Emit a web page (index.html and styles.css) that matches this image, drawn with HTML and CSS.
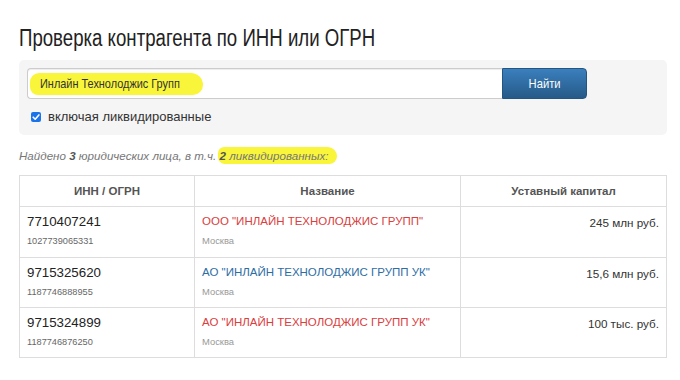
FILE: index.html
```html
<!DOCTYPE html>
<html lang="ru">
<head>
<meta charset="utf-8">
<link rel="stylesheet" href="styles.css">
</head>
<body>
<div class="page">
  <h1 class="title"><span class="narrow">Проверка контрагента по ИНН или ОГРН</span></h1>
  <div class="panel">
    <div class="search">
      <div class="input"><span class="mark"><span class="narrow-in">Инлайн Технолоджис Групп</span></span></div>
      <button class="btn"><span class="narrow-btn">Найти</span></button>
    </div>
    <label class="check"><span class="box"><svg width="10" height="10" viewBox="0 0 10 10"><path d="M2.2 5.2 L4.2 7.2 L7.9 2.9" fill="none" stroke="#fff" stroke-width="1.6" stroke-linecap="round" stroke-linejoin="round"/></svg></span>включая ликвидированные</label>
  </div>
  <p class="summary">Найдено <b>3</b> юридических лица, в т.ч. <span class="mark2"><b>2</b> ликвидированных:</span></p>
  <table class="results">
    <thead>
      <tr><th class="c1">ИНН / ОГРН</th><th class="c2">Название</th><th class="c3">Уставный капитал</th></tr>
    </thead>
    <tbody>
      <tr>
        <td><div class="inn">7710407241</div><div class="sub">1027739065331</div></td>
        <td><div class="name dead">ООО "ИНЛАЙН ТЕХНОЛОДЖИС ГРУПП"</div><div class="city">Москва</div></td>
        <td class="cap">245 млн руб.</td>
      </tr>
      <tr>
        <td><div class="inn">9715325620</div><div class="sub">1187746888955</div></td>
        <td><div class="name live">АО "ИНЛАЙН ТЕХНОЛОДЖИС ГРУПП УК"</div><div class="city">Москва</div></td>
        <td class="cap">15,6 млн руб.</td>
      </tr>
      <tr>
        <td><div class="inn">9715324899</div><div class="sub">1187746876250</div></td>
        <td><div class="name dead">АО "ИНЛАЙН ТЕХНОЛОДЖИС ГРУПП УК"</div><div class="city">Москва</div></td>
        <td class="cap">100 тыс. руб.</td>
      </tr>
    </tbody>
  </table>
</div>
</body>
</html>
```
FILE: styles.css
```css
* { box-sizing: border-box; }
html, body { margin: 0; padding: 0; background: #fff; }
body { font-family: "Liberation Sans", Arial, sans-serif; color: #333; }
.page { width: 667px; padding: 0 0 0 19px; }
.title { margin: 0; padding-top: 23px; font-size: 23px; font-weight: normal; line-height: 30px; color: #222; white-space: nowrap; }
.narrow { display: inline-block; transform: scaleX(0.81); transform-origin: left center; }
.panel { margin-top: 7px; background: #f5f5f5; border-radius: 5px; padding: 8px 9px 9px 8px; height: 75px; }
.search { display: flex; height: 31px; width: 560px; }
.input { flex: 1; background: #fff; border: 1px solid #ccc; border-right: none; border-radius: 4px 0 0 4px; box-shadow: inset 0 1px 1px rgba(0,0,0,.075); padding: 3px 2px; display: flex; align-items: center; }
.mark { display: block; width: 173px; white-space: nowrap; background: #f9f53a; color: #333; font-size: 13px; padding: 3px 0 4px 10px; border-radius: 9px 12px 10px 8px; line-height: 15px; }
.narrow-in { display: inline-block; transform: scaleX(0.84); transform-origin: left center; }
.btn { width: 85px; border: 1px solid #245580; border-radius: 0 4px 4px 0; background: linear-gradient(#3a7fbd, #265a88); color: #fff; font-family: inherit; font-size: 13px; padding: 0; }
.narrow-btn { display: inline-block; transform: scaleX(0.86); }
.check { display: flex; align-items: center; margin-top: 10px; margin-left: 4px; font-size: 13px; color: #333; }
.box { width: 10px; height: 10px; background: #1a73e8; border-radius: 2px; margin-right: 7px; display: flex; }
.summary { margin: 13px 0 0; font-size: 11.6px; font-style: italic; color: #777; line-height: 16px; height: 16px; }
.summary b { color: #555; }
.mark2 { background: #f9f53a; padding: 2px 9px 2px 2px; border-radius: 8px 12px 10px 9px; margin-left: -2px; }
.results { margin-top: 11px; border-collapse: collapse; width: 648px; table-layout: fixed; font-size: 11.7px; }
.results th, .results td { border: 1px solid #ddd; }
.results th { height: 31px; font-weight: bold; color: #555; font-size: 11.5px; text-align: center; padding: 0; }
.c1 { width: 175px; }
.c2 { width: 266px; }
.results td { vertical-align: top; padding: 6px 7px 0 7px; height: 50px; }
.results tbody tr:first-child td { height: 51px; }
.inn { font-size: 13.3px; line-height: 17px; color: #222; }
.sub { font-size: 9.2px; color: #666; margin-top: 5px; line-height: 12px; }
.name { font-size: 11.5px; line-height: 17px; }
.dead { color: #d9403e; }
.live { color: #2e6da4; }
.city { font-size: 9.4px; color: #999; margin-top: 5px; line-height: 12px; }
.cap { text-align: right; color: #333; padding-top: 7px !important; line-height: 17px; }
```
